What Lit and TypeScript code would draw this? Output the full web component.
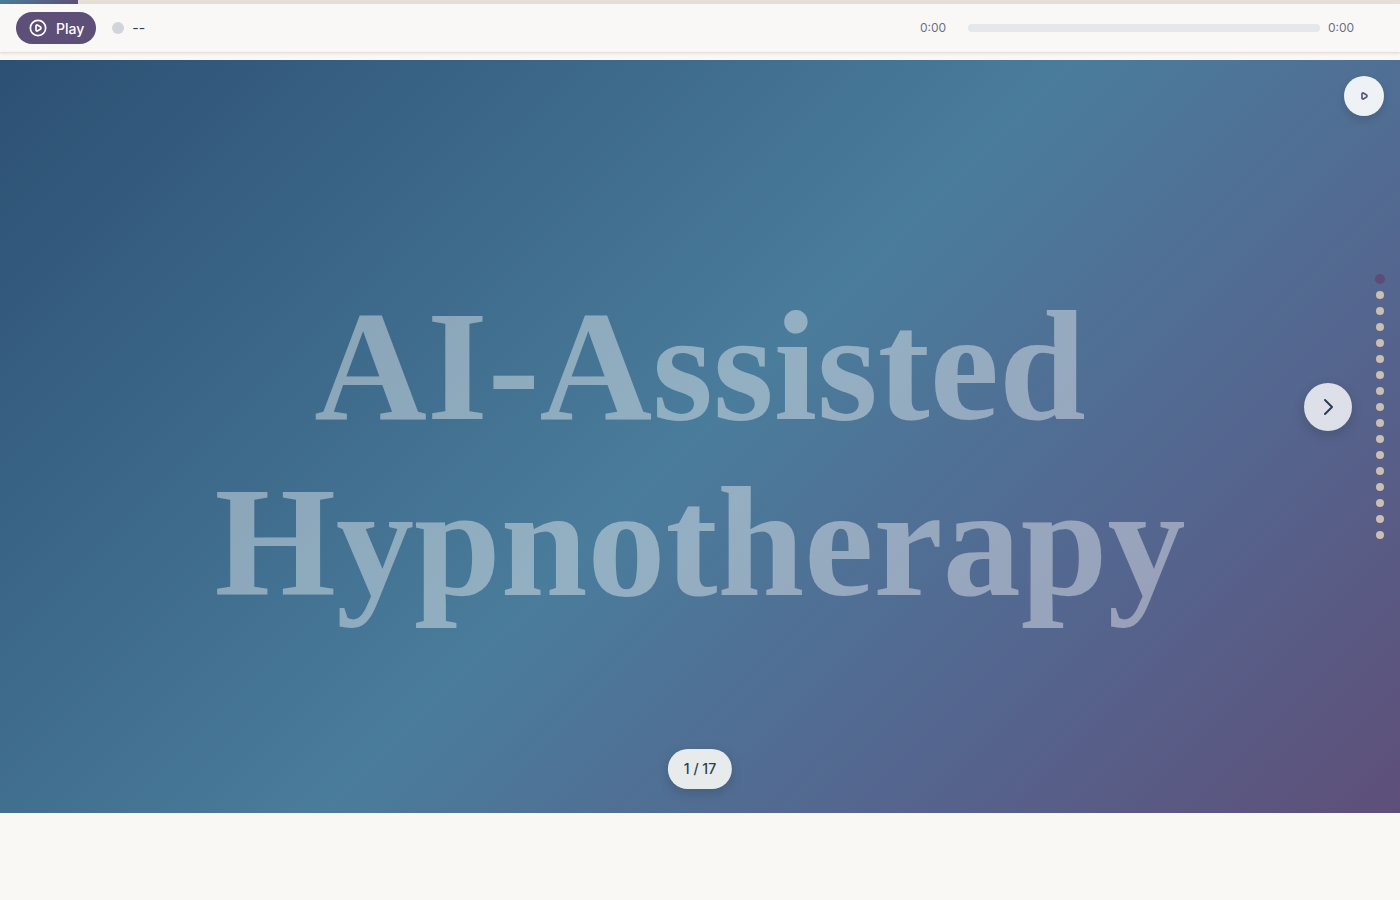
import { LitElement, html, css, svg } from "lit";
import { customElement, state } from "lit/decorators.js";
import { classMap } from "lit/directives/class-map.js";

const SLIDE_COUNT = 17;

const playGlyph = svg`<path d="M9.6 9.4v5.2a1.1 1.1 0 0 0 1.5 1l3.6-2.1a1.7 1.7 0 0 0 0-3l-3.6-2.1a1.1 1.1 0 0 0-1.5 1z"></path>`;

@customElement("app-root")
export class AppRoot extends LitElement {
  @state() private current = 0;

  static styles = css`
    :host {
      display: flex;
      flex-direction: column;
      box-sizing: border-box;
      min-height: 100vh;
      padding-bottom: 87px;
      background: #faf8f4;
      color: #2d3e50;
      font-family: Inter, "Liberation Sans", sans-serif;
    }
    button {
      border: 0;
      padding: 0;
      font: inherit;
      cursor: pointer;
    }
    svg {
      display: block;
      fill: none;
      stroke: currentColor;
      stroke-width: 2;
      stroke-linecap: round;
      stroke-linejoin: round;
    }
    .deck {
      position: relative;
      flex: 1;
      display: flex;
      flex-direction: column;
    }
    .progress {
      height: 4px;
      background: #e6dfd7;
    }
    .progress-fill {
      height: 100%;
      background: linear-gradient(135deg, #4a7c9b, #5e4f79);
    }
    .player {
      display: flex;
      align-items: center;
      gap: 16px;
      padding: 8px 16px;
      background: #faf8f6;
      border-bottom: 1px solid #e6dfd7;
      box-shadow: 0 1px 3px rgba(0, 0, 0, 0.08);
      margin-bottom: 7px;
    }
    .play {
      display: flex;
      align-items: center;
      gap: 8px;
      height: 32px;
      padding: 0 12px;
      border-radius: 16px;
      background: #5e4f79;
      color: #fff;
      font-size: 14px;
      font-weight: 500;
    }
    .status {
      display: flex;
      align-items: center;
      gap: 8px;
      font-size: 14px;
      line-height: 20px;
    }
    .status-dot {
      width: 12px;
      height: 12px;
      border-radius: 50%;
      background: #d1d5db;
    }
    .timeline {
      display: flex;
      align-items: center;
      gap: 8px;
      width: 32vw;
      margin-left: auto;
      margin-right: 16px;
      font-size: 12px;
      line-height: 16px;
      color: #6b7280;
    }
    .time {
      width: 40px;
    }
    .seek {
      flex: 1;
      min-width: 0;
      height: 8px;
      margin: 0;
      border-radius: 4px;
      background: #e5e7eb;
      appearance: none;
    }
    .seek::-webkit-slider-thumb {
      appearance: none;
      width: 8px;
      height: 8px;
      background: transparent;
    }
    .slide {
      flex: 1;
      display: flex;
      align-items: center;
      justify-content: center;
      padding: 36px 96px 0;
      background: linear-gradient(135deg, #2c5073 0%, #4a7c9b 50%, #54668f 75%, #5e4f79 100%);
    }
    .title {
      margin: 0;
      max-width: 1152px;
      text-align: center;
      font-family: "Liberation Serif", serif;
      font-size: 156px;
      line-height: 176px;
      font-weight: 700;
      color: #fff;
      opacity: 0.4;
    }
    .round {
      position: absolute;
      display: grid;
      place-items: center;
      border-radius: 50%;
    }
    .slide-play {
      top: 76px;
      right: 16px;
      width: 40px;
      height: 40px;
      background: rgba(255, 255, 255, 0.9);
      color: #5e4f79;
      box-shadow: 0 4px 8px rgba(0, 0, 0, 0.12);
    }
    .next {
      top: 50%;
      right: 48px;
      width: 48px;
      height: 48px;
      transform: translateY(-50%);
      background: rgba(255, 255, 255, 0.8);
      color: #2d3e50;
      box-shadow: 0 4px 12px rgba(0, 0, 0, 0.15);
    }
    .dots {
      position: absolute;
      top: 50%;
      right: 15px;
      transform: translateY(-50%);
      display: flex;
      flex-direction: column;
      align-items: center;
      gap: 8px;
      width: 10px;
    }
    .dot {
      width: 8px;
      height: 8px;
      border-radius: 50%;
      background: #c9bfb2;
    }
    .dot.active {
      background: #5e4b76;
      transform: scale(1.25);
    }
    .counter {
      position: absolute;
      bottom: 24px;
      left: 50%;
      transform: translateX(-50%);
      padding: 8px 16px;
      border-radius: 20px;
      background: #e8ebeb;
      box-shadow: 0 4px 12px rgba(0, 0, 0, 0.15);
      font-size: 14px;
      line-height: 24px;
      font-weight: 500;
      white-space: nowrap;
    }
  `;

  private next() {
    this.current = Math.min(this.current + 1, SLIDE_COUNT - 1);
  }

  render() {
    return html`
      <div class="deck">
        <div class="progress">
          <div class="progress-fill" style="width: ${((this.current + 1) / (SLIDE_COUNT + 1)) * 100}%"></div>
        </div>
        <header class="player">
          <button class="play">
            <svg width="20" height="20" viewBox="0 0 24 24">
              <circle cx="12" cy="12" r="9.2"></circle>
              ${playGlyph}
            </svg>
            Play
          </button>
          <div class="status"><span class="status-dot"></span><span>--</span></div>
          <div class="timeline">
            <span class="time">0:00</span>
            <input class="seek" type="range" min="0" max="100" value="0" aria-label="Seek" />
            <span class="time">0:00</span>
          </div>
        </header>
        <main class="slide">
          <h1 class="title">AI-Assisted Hypnotherapy</h1>
        </main>
        <button class="round slide-play" aria-label="Play slide">
          <svg width="20" height="20" viewBox="0 0 24 24">${playGlyph}</svg>
        </button>
        <button class="round next" aria-label="Next slide" @click=${this.next}>
          <svg width="24" height="24" viewBox="0 0 24 24"><path d="M9 5l7 7-7 7"></path></svg>
        </button>
        <nav class="dots" aria-label="Slides">
          ${Array.from(
            { length: SLIDE_COUNT },
            (_, i) => html`<button
              class=${classMap({ dot: true, active: i === this.current })}
              aria-label="Slide ${i + 1}"
              @click=${() => (this.current = i)}
            ></button>`
          )}
        </nav>
        <div class="counter">${this.current + 1} / ${SLIDE_COUNT}</div>
      </div>
    `;
  }
}
